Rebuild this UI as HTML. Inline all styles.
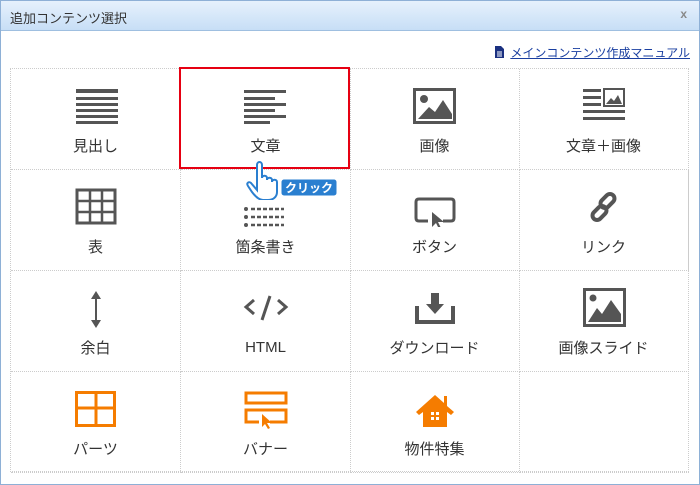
<!DOCTYPE html><html><head><meta charset="utf-8"><style>
*{margin:0;padding:0;box-sizing:border-box}
body{width:700px;height:485px;background:#fff;font-family:"Liberation Sans","Noto Sans CJK JP",sans-serif;position:relative;overflow:hidden}
.frame{position:absolute;left:0;top:0;width:700px;height:485px;border:1px solid #8eb0d6}
.hdr{position:absolute;left:1px;top:1px;width:698px;height:30px;background:linear-gradient(#e6f1fc,#c7def6);border-bottom:1px solid #9fbfe0}
.hdr span{position:absolute;left:9px;top:7px;font-size:13px;color:#333}
.hdr b{position:absolute;right:12px;top:6px;font-size:12px;color:#888;font-weight:bold}
.man{position:absolute;right:10px;top:44px;font-size:12px;color:#1a3fa0;text-decoration:underline}
.man svg{vertical-align:-1px;margin-right:6px}
.grid{position:absolute;left:10px;top:68px;width:679px;height:404px;border:1px dotted #ccc}
.c{position:absolute;width:170px;height:101px;border-right:1px dotted #ccc;border-bottom:1px dotted #ccc}
.c svg{position:absolute;left:61px;top:17px}
.c p{position:absolute;left:0;width:100%;top:66px;text-align:center;font-size:15px;color:#333}
.sel{position:absolute;left:179px;top:67px;width:171px;height:102px;border:2px solid #e60012}
</style></head><body>
<div class="frame"></div>
<div class="hdr"><span>追加コンテンツ選択</span><b>x</b></div>
<div class="man"><svg width="9" height="12"><path d="M0 0H6L9 3V12H0Z" fill="#1a3080"/><path d="M2 6H7M2 8H7M2 10H7" stroke="#fff"/></svg>メインコンテンツ作成マニュアル</div>
<div class="grid">
<div class="c" style="left:0;top:0"><svg width="48" height="40" fill="#555"><rect x="4" y="3" width="42" height="4"/><rect x="4" y="11" width="42" height="3"/><rect x="4" y="17" width="42" height="3"/><rect x="4" y="23" width="42" height="3"/><rect x="4" y="29" width="42" height="3"/><rect x="4" y="35" width="42" height="3"/></svg><p>見出し</p></div>
<div class="c" style="left:170px;top:0"><svg width="48" height="40" fill="#555"><rect x="2" y="4" width="42" height="3"/><rect x="2" y="11" width="31" height="3"/><rect x="2" y="17" width="42" height="3"/><rect x="2" y="23" width="31" height="3"/><rect x="2" y="29" width="42" height="3"/><rect x="2" y="35" width="26" height="3"/></svg><p>文章</p></div>
<div class="c" style="left:339px;top:0"><svg width="48" height="40"><rect x="3.5" y="3.5" width="40" height="33" fill="none" stroke="#555" stroke-width="3"/><circle cx="13" cy="13" r="4" fill="#555"/><path d="M7 33 L18 21 L24 26 L32 14 L41 28 L41 33Z" fill="#555"/></svg><p>画像</p></div>
<div class="c" style="left:508px;top:0"><svg width="48" height="40" fill="#555"><rect x="3" y="3" width="18" height="3"/><rect x="3" y="10" width="18" height="3"/><rect x="3" y="17" width="18" height="3"/><rect x="3" y="24" width="42" height="3"/><rect x="3" y="31" width="42" height="3"/><rect x="24" y="3" width="20" height="17" fill="none" stroke="#555" stroke-width="2"/><path d="M26 18 L31 12 L34 15 L38 9 L42 18Z"/></svg><p>文章＋画像</p></div>

<div class="c" style="left:0;top:101px"><svg width="48" height="40"><rect x="5" y="3" width="38" height="33" fill="none" stroke="#555" stroke-width="3"/><path d="M18 3V36M30 3V36M5 14H43M5 25H43" stroke="#555" stroke-width="2.5"/></svg><p>表</p></div>
<div class="c" style="left:170px;top:101px"><svg width="48" height="40" fill="#555"><circle cx="4" cy="22" r="2"/><circle cx="4" cy="30" r="2"/><circle cx="4" cy="38" r="2"/><path d="M9 22h33M9 30h33M9 38h33" stroke="#555" stroke-width="2.5" stroke-dasharray="4 2"/></svg><p>箇条書き</p></div>
<div class="c" style="left:339px;top:101px"><svg width="48" height="40"><path d="M17 34H8Q5 34 5 31V15Q5 12 8 12H40Q43 12 43 15V31Q43 34 40 34H32" fill="none" stroke="#555" stroke-width="3"/><path d="M21 25V40L25 36L28 42L30 41L27 35L33 35Z" fill="#555"/></svg><p>ボタン</p></div>
<div class="c" style="left:508px;top:101px"><svg width="48" height="40"><g fill="none" stroke="#555" stroke-width="4"><rect x="23" y="6" width="9" height="16" rx="4.5" transform="rotate(45 27.5 14)"/><rect x="15" y="18" width="9" height="16" rx="4.5" transform="rotate(45 19.5 26)"/></g></svg><p>リンク</p></div>

<div class="c" style="left:0;top:202px"><svg width="48" height="40" fill="#555"><path d="M24 3L19 11H29ZM24 40L19 32H29Z"/><rect x="23" y="9" width="2" height="24"/></svg><p>余白</p></div>
<div class="c" style="left:170px;top:202px"><svg width="48" height="40"><path d="M12 12L4 19L12 26M36 12L44 19L36 26M28 8L20 32" fill="none" stroke="#555" stroke-width="3"/></svg><p style="top:68px">HTML</p></div>
<div class="c" style="left:339px;top:202px"><svg width="48" height="40"><path d="M6 18V34H42V18" fill="none" stroke="#555" stroke-width="4"/><path d="M20 5H28V16H33L24 26L15 16H20Z" fill="#555"/></svg><p>ダウンロード</p></div>
<div class="c" style="left:508px;top:202px"><svg width="48" height="44"><rect x="4.5" y="1.5" width="40" height="36" fill="none" stroke="#555" stroke-width="3"/><circle cx="13" cy="10" r="3.5" fill="#555"/><path d="M8 34L17 20L22 26L31 12L41 26V34Z" fill="#555"/></svg><p>画像スライド</p></div>

<div class="c" style="left:0;top:303px"><svg width="48" height="40"><rect x="4.5" y="3.5" width="38" height="33" fill="none" stroke="#f57c00" stroke-width="3"/><path d="M24 3V36M5 19H43" stroke="#f57c00" stroke-width="3"/></svg><p>パーツ</p></div>
<div class="c" style="left:170px;top:303px"><svg width="48" height="40"><g fill="none" stroke="#f57c00" stroke-width="3"><rect x="4" y="4" width="40" height="10"/><path d="M17 33H4V21H44V33H28"/></g><path d="M20 25V38L23 35L26 40L28 39L25 34L30 34Z" fill="#f57c00"/></svg><p>バナー</p></div>
<div class="c" style="left:339px;top:303px"><svg width="48" height="40"><path d="M24 6L5 23L8 26L12 23V38H36V23L40 26L43 23L36 17V7H33V14Z" fill="#f57c00"/><g fill="#fff"><rect x="20" y="23" width="3" height="3"/><rect x="25" y="23" width="3" height="3"/><rect x="20" y="28" width="3" height="3"/><rect x="25" y="28" width="3" height="3"/></g></svg><p>物件特集</p></div>
<div class="c" style="left:508px;top:303px;border-right:none"></div>
</div>
<div class="sel"></div>
<svg style="position:absolute;left:243px;top:158px" width="95" height="42"><rect x="38" y="21" width="56" height="17" rx="3" fill="#2a7fd0" stroke="#fff"/><text x="42" y="34" font-size="12" font-weight="bold" fill="#fff" font-family="Noto Sans CJK JP,sans-serif">クリック</text><path d="M14 32V7C14 3 19 3 19 7V20C19 17 24 17 24 20V22C24 19 29 19 29 22V24C29 21 34 21 34 24V34C34 39 30 42 25 42H20C16 42 12 38 9 34L5 28C3 25 6 23 8 25L14 32Z" fill="#fff" stroke="#2a7fd0" stroke-width="2"/></svg>
</body></html>
